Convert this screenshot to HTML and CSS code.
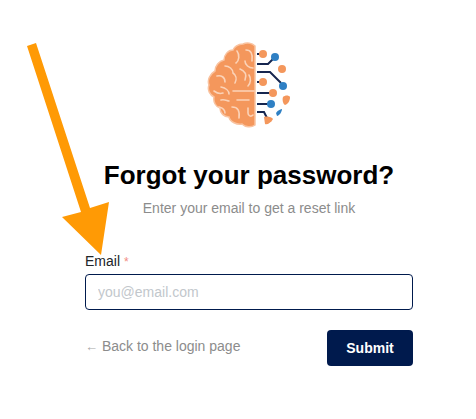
FILE: index.html
```html
<!DOCTYPE html>
<html lang="en">
<head>
<meta charset="utf-8">
<title>Forgot your password?</title>
<link rel="stylesheet" href="styles.css">
</head>
<body>
<main class="page">
  <svg class="logo" width="96" height="90" viewBox="0 0 96 90" aria-hidden="true">
    <path class="brain" d="M48 5 C45 2 40 1 36 3 C31 3 27 6 26 9 C21 9 17 14 17 19 C12 20 8 25 8 30 C3 33 0 39 2 44 C0 49 3 54 7 56 C6 61 9 66 13 67 C13 72 17 76 22 76 C23 81 30 84 35 83 C38 86 44 87 48 84 Z"/>
    <g class="folds">
      <path d="M30 10 C33 14 32 20 29 22 M39 9 C44 9 46 13 45 20 M38 20 C38 24 42 27 46 27"/>
      <path d="M18 25 C22 25 26 28 26 32 C29 34 30 38 28 42 M10 35 C14 34 18 36 18 41"/>
      <path d="M33 28 C38 30 40 34 38 39 M42 34 C44 37 44 42 41 45 M14 46 C19 47 22 50 22 53"/>
      <path d="M26 50 L47 50 M7 50 C11 53 13 53 16 52"/>
      <path d="M14 59 C18 58 20 60 22 60 M30 59 L42 59 M25 66 C31 66 33 70 32 77 M12 66 C16 67 18 69 18 72 M41 67 L41 72 C41 75 44 76 46 74"/>
    </g>
    <g class="circuit">
      <path d="M50 13 L54 13"/>
      <path d="M50 23 L61 23 L67 17"/>
      <path d="M50 31 L63 31 L74 42"/>
      <path d="M50 41 L54 41"/>
      <path d="M50 52 L64 52"/>
      <path d="M50 63 L62 63"/>
      <path d="M50 71 L57 71 L60 77"/>
    </g>
    <g class="orange">
      <circle cx="56" cy="13" r="4"/>
      <circle cx="75" cy="28" r="4"/>
      <circle cx="56" cy="41" r="4"/>
      <circle cx="66" cy="52" r="4"/>
      <path d="M76 56 C78 54 82 54 83 56 C83 60 81 63 78 64 C76 63 75 59 76 56 Z"/>
      <path d="M57 76 C60 75 65 76 66 78 C64 82 60 84 58 83 Z"/>
    </g>
    <g class="blue">
      <circle cx="68" cy="16" r="4"/>
      <circle cx="76" cy="45" r="4"/>
      <circle cx="64" cy="63" r="4"/>
      <path d="M69 72 C71 69 74 68 75 68 C75 71 72 75 70 75 Z"/>
    </g>
  </svg>
  <h1 class="title">Forgot your password?</h1>
  <p class="subtitle">Enter your email to get a reset link</p>
  <form class="form">
    <label class="label" for="email">Email <span class="req">*</span></label>
    <input class="input" id="email" type="email" placeholder="you@email.com">
    <div class="actions">
      <a class="back" href="#"><span class="arrow">←</span> Back to the login page</a>
      <button class="submit" type="button">Submit</button>
    </div>
  </form>
</main>
<svg class="annotation" width="476" height="419" viewBox="0 0 476 419" aria-hidden="true">
  <polygon points="27,46 36,43 90,208 109,202 101,255 62,217 81,212"/>
</svg>
</body>
</html>
```
FILE: styles.css
```css
* { box-sizing: border-box; }
html, body { margin: 0; padding: 0; }
body {
  width: 476px;
  height: 419px;
  overflow: hidden;
  background: #fff;
  font-family: "Liberation Sans", Arial, sans-serif;
}
.page {
  width: 328px;
  margin-left: 85px;
  padding-top: 41px;
  display: flex;
  flex-direction: column;
}
.logo { display: block; align-self: center; margin-left: 12px; }
.brain { fill: #f4975c; stroke: #f9c3a0; stroke-width: 1.5; }
.folds path { fill: none; stroke: #fbd3b8; stroke-width: 1.6; stroke-linecap: round; }
.circuit path { fill: none; stroke: #16264f; stroke-width: 2; }
.orange { fill: #f4975c; }
.blue { fill: #2f80c4; }
.title {
  margin: 28px 0 0;
  font-size: 26px;
  line-height: 32px;
  font-weight: 700;
  color: #000;
  text-align: center;
}
.subtitle {
  margin: 7px 0 0;
  font-size: 14px;
  line-height: 20px;
  color: #8c8c8c;
  text-align: center;
}
.form { display: flex; flex-direction: column; margin-top: 33px; }
.label { font-size: 14px; line-height: 20px; color: #212529; }
.req { color: #f28b82; font-size: 12px; line-height: 1; }
.input {
  margin-top: 3px;
  width: 100%;
  height: 36px;
  padding: 0 12px;
  border: 1px solid #001a4d;
  border-radius: 4px;
  font: 14px "Liberation Sans", Arial, sans-serif;
  color: #212529;
  background: #fff;
}
.input::placeholder { color: #c2c7cc; opacity: 1; }
.actions {
  display: flex;
  justify-content: space-between;
  align-items: center;
  margin-top: 20px;
}
.back { font-size: 14px; line-height: 20px; color: #8c8c8c; text-decoration: none; margin-top: -4px; }
.arrow { font-size: 13px; color: #a8a8a8; line-height: 1; }
.submit {
  width: 86px;
  height: 36px;
  border: 0;
  border-radius: 4px;
  background: #001a4d;
  color: #fff;
  font: 700 14px "Liberation Sans", Arial, sans-serif;
}
.annotation { position: absolute; left: 0; top: 0; pointer-events: none; }
.annotation polygon { fill: #ff9a05; }
```
